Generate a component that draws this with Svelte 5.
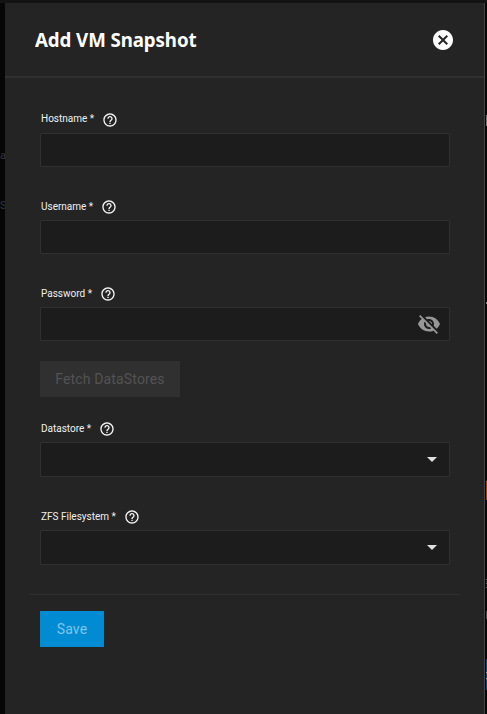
<script>
  const credentials = [
    { label: 'Hostname', id: 'hostname', type: 'text', textWidth: 53 },
    { label: 'Username', id: 'username', type: 'text', textWidth: 52 },
    { label: 'Password', id: 'password', type: 'password', textWidth: 51 }
  ];
  const targets = [
    { label: 'Datastore', id: 'datastore', textWidth: 50 },
    { label: 'ZFS Filesystem', id: 'filesystem', textWidth: 75 }
  ];
</script>

{#snippet fieldLabel(field)}
  <div class="label">
    <label for={field.id} style:width="{field.textWidth}px">{field.label} *</label>
    <svg class="help" viewBox="0 0 24 24" aria-hidden="true">
      <path d="M11 18h2v-2h-2v2zm1-16C6.48 2 2 6.48 2 12s4.48 10 10 10 10-4.48 10-10S17.52 2 12 2zm0 18c-4.41 0-8-3.59-8-8s3.59-8 8-8 8 3.59 8 8-3.59 8-8 8zm0-14c-2.21 0-4 1.79-4 4h2c0-1.1.9-2 2-2s2 .9 2 2c0 2-3 1.75-3 5h2c0-2.25 3-2.5 3-5 0-2.21-1.79-4-4-4z" />
    </svg>
  </div>
{/snippet}

<div class="page">
  <span class="behind first">as</span>
  <span class="behind second">S</span>
  <i class="edge white"></i>
  <i class="edge dash"></i>
  <i class="edge orange"></i>
  <i class="edge lines"></i>
  <i class="edge gray"></i>
  <i class="edge blue"></i>

  <section class="panel">
    <header>
      <h1>Add VM Snapshot</h1>
      <svg class="close" viewBox="0 0 24 24" role="img" aria-label="Close">
        <path d="M12 2C6.47 2 2 6.47 2 12s4.47 10 10 10 10-4.47 10-10S17.53 2 12 2zm5 13.59L15.59 17 12 13.41 8.41 17 7 15.59 10.59 12 7 8.41 8.41 7 12 10.59 15.59 7 17 8.41 13.41 12 17 15.59z" />
      </svg>
    </header>

    <form>
      {#each credentials as field}
        <div class="field">
          {@render fieldLabel(field)}
          <div class="control">
            <input id={field.id} type={field.type} />
            {#if field.type === 'password'}
              <svg class="eye" viewBox="0 0 24 24" aria-hidden="true">
                <path d="M12 7c2.76 0 5 2.24 5 5 0 .65-.13 1.26-.36 1.83l2.92 2.92c1.51-1.26 2.7-2.89 3.43-4.75-1.73-4.39-6-7.5-11-7.5-1.4 0-2.74.25-3.98.7l2.16 2.16C10.74 7.13 11.35 7 12 7zM2 4.27l2.28 2.28.46.46C3.08 8.3 1.78 10.02 1 12c1.73 4.39 6 7.5 11 7.5 1.55 0 3.03-.3 4.38-.84l.42.42L19.73 22 21 20.73 3.27 3 2 4.27zM7.53 9.8l1.55 1.55c-.05.21-.08.43-.08.65 0 1.66 1.34 3 3 3 .22 0 .44-.03.65-.08l1.55 1.55c-.67.33-1.41.53-2.2.53-2.76 0-5-2.24-5-5 0-.79.2-1.53.53-2.2zm4.31-.78l3.15 3.15.02-.16c0-1.66-1.34-3-3-3l-.17.01z" />
              </svg>
            {/if}
          </div>
        </div>
      {/each}

      <button class="fetch" type="button" disabled>Fetch DataStores</button>

      {#each targets as field}
        <div class="field select">
          {@render fieldLabel(field)}
          <div class="control" id={field.id}>
            <svg class="arrow" viewBox="0 0 10 5" aria-hidden="true"><path d="M0 0h10L5 5z" /></svg>
          </div>
        </div>
      {/each}

      <hr />
      <button class="save" type="button" disabled>Save</button>
    </form>
  </section>
</div>

<style>
  :global(body) { margin: 0; background: #070707; }
  .page {
    position: relative;
    box-sizing: border-box;
    width: 487px;
    height: 714px;
    padding: 3px 2px 0 5px;
    overflow: hidden;
    background: linear-gradient(#131313 3px, #060606 3px);
    font-family: Roboto, sans-serif;
  }
  .panel {
    position: relative;
    box-sizing: border-box;
    height: 711px;
    background: #242424;
    border-right: 1px solid #444;
  }
  header {
    box-sizing: border-box;
    height: 75px;
    padding: 0 29px 0 30px;
    display: flex;
    align-items: center;
    justify-content: space-between;
    border-bottom: 2px solid #303030;
  }
  h1 {
    margin: 0;
    color: #fff;
    font: 700 20px/30px "Noto Sans", sans-serif;
    letter-spacing: -0.1px;
    white-space: nowrap;
    transform: scaleX(0.935);
    transform-origin: left center;
  }
  .close { width: 24px; height: 24px; fill: #fff; }
  form { padding: 30px 34px 0 35px; display: flex; flex-direction: column; }
  .field { height: 87px; }
  .field:nth-child(3) { height: 86px; }
  .label { display: flex; align-items: center; height: 22px; margin-bottom: 3px; }
  label { margin-left: 1px; padding-top: 2px; color: #f0f0f0; font-size: 10px; line-height: 16px; white-space: nowrap; }
  .field:first-child label { padding-top: 0; }
  .help { width: 16px; height: 16px; margin-left: 8px; fill: #f5f5f5; position: relative; top: 1px; }
  .control {
    box-sizing: border-box;
    height: 34px;
    border: 1px solid #303030;
    border-radius: 1px;
    background: #1c1c1c;
    display: flex;
    align-items: center;
    justify-content: flex-end;
  }
  input { flex: 1; min-width: 0; height: 30px; padding: 0 8px; border: 0; outline: 0; background: transparent; color: #fff; }
  .eye { width: 24px; height: 24px; margin-right: 8px; fill: #979797; }
  .arrow { width: 10px; height: 5px; margin-right: 12px; fill: #e0e0e0; }
  button { align-self: flex-start; height: 36px; padding: 0; border: 0; font: 400 14px/36px Roboto, sans-serif; letter-spacing: 0.15px; }
  .fetch { width: 140px; margin: -7px 0 20px; background: #303030; color: #535353; }
  .select { height: 88px; }
  .select .control { height: 35px; }
  hr { width: 431px; height: 1px; margin: 1px -11px 16px; border: 0; background: #303030; }
  .save { width: 64px; background: #008bd3; color: #80c4e8; }
  .behind { position: absolute; left: 0; color: #383838; font-size: 11px; line-height: 14px; letter-spacing: -1px; }
  .first { top: 149px; }
  .second { top: 199px; }
  .edge { position: absolute; right: 0; width: 1px; }
  .white { top: 115px; height: 11px; background: #777; }
  .dash { top: 302px; height: 2px; background: #888; }
  .orange { top: 481px; height: 19px; background: #a84300; }
  .lines { top: 579px; height: 9px; background: repeating-linear-gradient(#666 0 1px, #111 1px 4px); }
  .gray { top: 611px; height: 8px; background: #444; }
  .blue { top: 659px; height: 31px; background: linear-gradient(#074c78 13px, #aaa 13px 14px, #074c78 14px 19px, #aaa 19px 20px, #074c78 20px); }
</style>
